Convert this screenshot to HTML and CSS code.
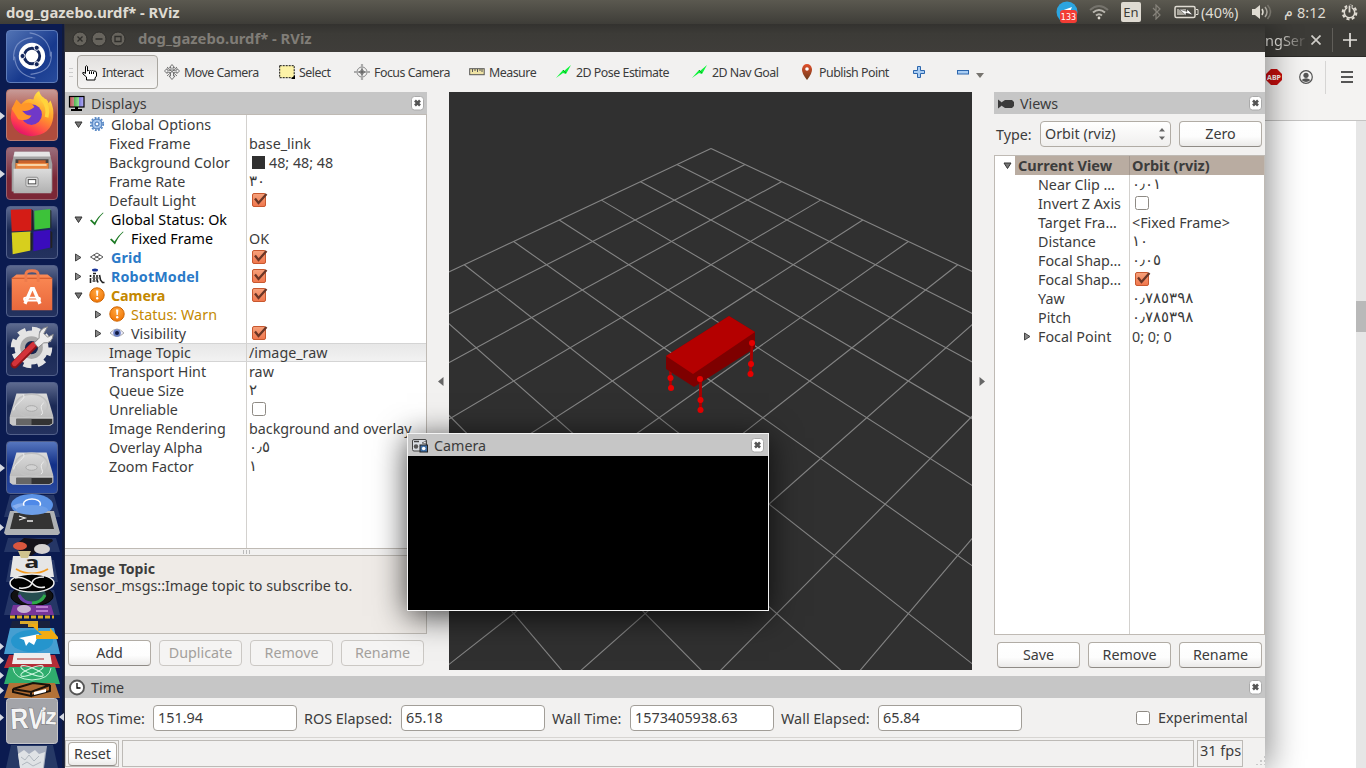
FILE: index.html
```html
<!DOCTYPE html>
<html lang="en">
<head>
<meta charset="utf-8">
<title>dog_gazebo.urdf* - RViz</title>
<link rel="stylesheet" href="styles.css">
</head>
<body>
<svg class="defs" width="0" height="0">
  <defs>
    <linearGradient id="orange" x1="0" y1="0" x2="0" y2="1"><stop offset="0" stop-color="#fb8a55"/><stop offset="1" stop-color="#e9683c"/></linearGradient>
    <linearGradient id="checkfill" x1="0" y1="0" x2="0" y2="1"><stop offset="0" stop-color="#f6a27c"/><stop offset="1" stop-color="#f0764c"/></linearGradient>
    <linearGradient id="disk" x1="0" y1="0" x2="0" y2="1"><stop offset="0" stop-color="#dcdcdc"/><stop offset="1" stop-color="#b0b0b0"/></linearGradient>
    <radialGradient id="warn" cx=".5" cy=".3" r=".8"><stop offset="0" stop-color="#ffa63e"/><stop offset="1" stop-color="#ee6f00"/></radialGradient>
    <linearGradient id="fox" x1=".8" y1="0" x2=".3" y2="1"><stop offset="0" stop-color="#fff04a"/><stop offset=".45" stop-color="#ff9a2b"/><stop offset=".8" stop-color="#ff3d4f"/><stop offset="1" stop-color="#e0106c"/></linearGradient>
    <linearGradient id="pin" x1="0" y1="0" x2="0" y2="1"><stop offset="0" stop-color="#e2502c"/><stop offset="1" stop-color="#6b3a1a"/></linearGradient>
    <symbol id="on" viewBox="0 0 17 16"><rect x="1.500" y="1.500" width="13" height="13" rx="1.500" fill="url(#checkfill)" stroke="#c8582f"/><path d="M4 6.500L7.500 11 15.500 2" fill="none" stroke="#6b3626" stroke-width="2.300"/></symbol>
    <symbol id="off" viewBox="0 0 17 16"><rect x="1.500" y="1.500" width="13" height="13" rx="2" fill="#fff" stroke="#8e8a84"/></symbol>
    <symbol id="down" viewBox="0 0 9 8"><path d="M1 1h7L4.500 6.500z" fill="#777" stroke="#333"/></symbol>
    <symbol id="right" viewBox="0 0 8 9"><path d="M1 1v7L6.500 4.500z" fill="#888" stroke="#444"/></symbol>
    <symbol id="tick" viewBox="0 0 15 15"><path d="M.5 8.500L2 7.500 5 10.500Q8 5 13.500.5L14 1Q8.500 6 5.500 13.500z" fill="#1d7a24"/></symbol>
    <symbol id="alert" viewBox="0 0 16 16"><circle cx="8" cy="8" r="7.200" fill="url(#warn)" stroke="#cf6500"/><path d="M7 3.500h2.400L8.800 9H7.600z" fill="#fff"/><circle cx="8.200" cy="11.300" r="1.200" fill="#fff"/></symbol>
    <symbol id="close" viewBox="0 0 13 15"><rect x=".5" y=".5" width="12" height="13.500" rx="3" fill="#fff" stroke="#aaa"/><path d="M4 4.500l5 5M9 4.500l-5 5" stroke="#555" stroke-width="2.600"/></symbol>
    <symbol id="arrow" viewBox="0 0 16 14"><path d="M0 13L7 5l1 1L15 0 10 9 7 8z" fill="#0df43a"/><path d="M7 5l3 3" stroke="#169c25"/></symbol>
    <symbol id="hdd" viewBox="0 0 53 53"><path d="M10 11h32l7 24v8l-3 2H6l-3-2v-8z" fill="url(#disk)"/><path d="M3 36h46v7l-3 2H6l-3-2z" fill="#c8c8c8"/><path d="M10 38h38v5l-3 1.500H10z" fill="#333"/><path d="M10 38h16v6.500H10z" fill="#666"/><ellipse cx="26" cy="24" rx="17" ry="12" fill="none" stroke="#c2c2c2" stroke-width="1.500"/><ellipse cx="26" cy="27" rx="6" ry="3" fill="#d2d2d2" stroke="#a8a8a8"/><path d="M17 12c5 5-9 9-10 17M36 34c5-3-4-8 3-13" fill="none" stroke="#eee"/></symbol>
  </defs>
</svg>

<header class="panel">
  <b class="panel-title">dog_gazebo.urdf* - RViz</b>
  <div class="tray">
    <svg class="tray-tg" width="22" height="22"><circle cx="11" cy="11" r="10.500" fill="#2ca5e0"/><path d="M5 10l11-4-3 7z" fill="#fff"/><rect x="4" y="9" width="17" height="13" rx="3" fill="#f23c34"/><text x="12.500" y="19" text-anchor="middle" class="badge">133</text></svg>
    <svg class="tray-wifi" width="20" height="16" fill="none" stroke-width="2"><path d="M1 6Q10-2 19 6" stroke="#75736c"/><path d="M4 8.500Q10 3.500 16 8.500M7 11.500Q10 9 13 11.500" stroke="#b9b6ae"/><circle cx="10" cy="14" r="1.400" fill="#dfdbd2" stroke="none"/></svg>
    <span class="lang">En</span>
    <svg class="tray-bt" width="10" height="16" fill="none" stroke="#85827a" stroke-width="1.200"><path d="M1 4l7 7-4 4V1l4 4-7 7"/></svg>
    <svg class="tray-bat" width="25" height="14"><rect x="1" y="1.500" width="20" height="11" rx="1.500" fill="none" stroke="#dfdbd2" stroke-width="1.500"/><rect x="3" y="4" width="9" height="6" fill="#a8a59c"/><path d="M22 4.500h2v5h-2" fill="none" stroke="#dfdbd2"/><path d="M5 4l8 2.500V4l6 6-7-2v2.500z" fill="#fff" stroke="#333" stroke-width=".5"/></svg>
    <span class="pct">(40%)</span>
    <svg class="tray-vol" width="21" height="16" fill="none" stroke-width="1.500"><path d="M1 5h3l5-4v14l-5-4H1z" fill="#dfdbd2"/><path d="M11 5q2 3 0 6" stroke="#dfdbd2"/><path d="M14 3q4 5 0 10" stroke="#aaa79f"/><path d="M16.500 1q6 7 0 14" stroke="#77746c"/></svg>
    <span class="meridiem">م</span><span class="clock">8:12</span>
    <svg class="tray-gear" width="17" height="17" fill="none" stroke="#dfdbd2"><circle cx="8.500" cy="8.500" r="6.800" stroke-width="2.200" stroke-dasharray="3 2.340"/><circle cx="8.500" cy="8.500" r="5.200" stroke-width="1.500"/><path d="M8.500 1v8" stroke="#44423d" stroke-width="4"/><path d="M8.500 1.500v7" stroke-width="1.800"/></svg>
  </div>
</header>

<section class="browser">
  <div class="tabs"><span class="tab-name">ngSer</span><svg width="10" height="10" stroke="#cfcdc8" stroke-width="1.700"><path d="M.5.5l9 9M9.500.5l-9 9"/></svg><i class="tab-sep"></i><svg width="14" height="14" stroke="#e4e2dd" stroke-width="1.700"><path d="M7 0v14M0 7h14"/></svg></div>
  <div class="navbar">
    <svg class="abp" width="16" height="16"><path d="M5 0h6l5 5v6l-5 5H5l-5-5V5z" fill="#c70d0d"/><text x="8" y="11" text-anchor="middle" class="abp-text">ABP</text></svg>
    <svg width="14" height="14"><circle cx="7" cy="7" r="6.300" fill="none" stroke="#555" stroke-width="1.200"/><circle cx="7" cy="5.300" r="2.600" fill="#555"/><path d="M2.500 10Q7 6.500 11.500 10 7 14 2.500 10" fill="#555"/></svg>
    <i class="nav-sep"></i>
    <svg width="12" height="12" stroke="#555" stroke-width="2"><path d="M0 1h12M0 6h12M0 11h12"/></svg>
  </div>
  <div class="page"><div class="scroll"><i class="thumb"></i></div></div>
</section>

<aside class="launcher">
  <div class="tile t-dash"><svg viewBox="0 0 53 53"><g fill="none" stroke="#8ea3d3" stroke-width="1.200" opacity=".7"><path d="M7 31C6 14 16 8 27 7M24 2c14 2 22 11 22 25M47 22c1 15-5 22-22 24M30 50C16 48 9 41 8 27"/></g><circle cx="26.500" cy="26.500" r="14" fill="#fff"/><circle cx="26.500" cy="26.500" r="8.200" fill="none" stroke="#14275b" stroke-width="3"/><g fill="#14275b" stroke="#fff"><circle cx="16.500" cy="26.500" r="2.700"/><circle cx="31.500" cy="17.800" r="2.700"/><circle cx="31.500" cy="35.200" r="2.700"/></g></svg></div>
  <div class="tile t-fox run"><svg viewBox="0 0 53 53"><path d="M5 20L10 10l5 5q6-7 13-5 1-6 6-9 2 7 8 9 2 2 2 4l2-3q4 8 3 18Q47 48 26 49 5 47 4 28z" fill="url(#fox)"/><circle cx="26" cy="26" r="11" fill="#7038c8"/><path d="M5 20l5-9 5 6q5-5 11-3l3 4q-6 5-13 4 5 6 10 5Q22 34 12 31z" fill="#ff9628"/><path d="M37 9q8 9 5 20" stroke="#ffd43c" stroke-width="4" fill="none"/></svg></div>
  <div class="tile t-files run"><svg viewBox="0 0 53 53"><path d="M8 4h37l3 13v29H5V17z" fill="#a2a2a2"/><path d="M8 4h37l1 5H7z" fill="#e5e5e5"/><path d="M9 12h35v11H9z" fill="#4a4340"/><path d="M12 13h29v8H12z" fill="#c9622c"/><path d="M9 16h35v7H9z" fill="#e8853f"/><path d="M11 18h31" stroke="#fff3d0" stroke-width="1.500"/><path d="M7 22h40v26H7z" fill="url(#disk)"/><rect x="20" y="31" width="13" height="10" rx="2" fill="#ddd" stroke="#888"/><rect x="22.500" y="33.500" width="8" height="4.500" fill="#fff" stroke="#444"/></svg></div>
  <div class="tile"><svg viewBox="0 0 53 53"><path d="M4 3l22-1v23l-21 1z" fill="#d41c16"/><path d="M29 4l17-2v20l-17 2z" fill="#3dc23a"/><path d="M5 27l20-1v20L6 50z" fill="#d7cf1d"/><path d="M28 26l18-2v19l-18 4z" fill="#3a0cbc"/><path d="M26 2l2 2v20l-2 1M46 3l1 1v19l-1-1M25 27l2 1v17l-2 2M46 25l2 2v16l-2 1" fill="#222"/></svg></div>
  <div class="tile"><svg viewBox="0 0 53 53"><path d="M5 13l5-4h33l5 4v34H5z" fill="url(#orange)"/><path d="M5 13h43" stroke="#c94f22"/><path d="M20 17V9q0-4 6.500-4T33 9v8" fill="none" stroke="#ee7b4c" stroke-width="3"/><g fill="none" stroke="#fff" stroke-width="3.500"><path d="M19 40l7-16h2l7 16"/><rect x="18" y="33.500" width="17" height="3" rx="1.500" stroke-width="2"/></g></svg></div>
  <div class="tile"><svg viewBox="0 0 53 53"><circle cx="26" cy="25" r="18" fill="#e4e4e4"/><circle cx="26" cy="25" r="19.500" fill="none" stroke="#e4e4e4" stroke-width="5" stroke-dasharray="8.500 6.800"/><circle cx="26" cy="25" r="12" fill="#aaa"/><circle cx="26" cy="25" r="7" fill="#18264f"/><path d="M8 43L28 23" stroke="#8b1418" stroke-width="8" stroke-linecap="round"/><path d="M8 42L28 22" stroke="#d3333a" stroke-width="5.500" stroke-linecap="round"/><path d="M29 20l5-5q-1-10 9-12l-4 7 4 4 6-3q-1 10-10 9l-6 5z" fill="#ececec" stroke="#888"/></svg></div>
  <div class="tile"><svg viewBox="0 0 53 53"><use href="#hdd"/></svg></div>
  <div class="tile t-blue run"><svg viewBox="0 0 53 53"><use href="#hdd"/></svg></div>
  <svg class="stack" width="65" height="274" viewBox="0 494 65 274">
    <path d="M10 495h44l6 22H4zM8 538h48l4 14H4zM10 560h44l4 22H6zM10 590h44l6 25H4z" fill="#344571" opacity=".65"/>
    <ellipse cx="32" cy="505" rx="21" ry="11" fill="#5b92e5"/><path d="M12 506q9-5 20-2l6 12H25z" fill="#8ab0ef"/><ellipse cx="32" cy="504" rx="8.500" ry="5" fill="#4f89e8" stroke="#fff" stroke-width="1.500"/>
    <path d="M10 511h44l6 22-2 2H6l-2-2z" fill="#aeb1b4"/><path d="M14 513h36l4 16H10z" fill="#343434"/><path d="M19 516l6 2-6 2M27 521h6" fill="none" stroke="#eee" stroke-width="1.300"/><ellipse cx="32" cy="510" rx="16" ry="5" fill="#6d9fe9"/>
    <path d="M15 545l9-7 14 1 14 0 1 2-9 6-13 9-11-4z" fill="#15121a"/><ellipse cx="20" cy="546" rx="7" ry="4" fill="#d9563e"/><ellipse cx="42" cy="549" rx="8" ry="5" fill="#d5d1d1"/>
    <path d="M13 556h38l3 21H10z" fill="#e6e6e6"/><path d="M18 551h13l-3 7h-7z" fill="#cfc38d"/><text transform="translate(32 568) scale(1.300 .8)" text-anchor="middle" class="amz">a</text><path d="M16 569q16 9 32 0" stroke="#f39a1e" stroke-width="2" fill="none"/>
    <ellipse cx="32" cy="596" rx="21" ry="10" fill="#111" stroke="#000"/><ellipse cx="32" cy="595" rx="14" ry="8" fill="#264d50"/><path d="M19 595q4 8 13 8" stroke="#6b3fb0" stroke-width="3" fill="none"/><path d="M32 603q9 0 13-8" stroke="#2eaa4b" stroke-width="3" fill="none"/>
    <ellipse cx="32" cy="583" rx="22" ry="9" fill="#000" stroke="#eee" stroke-width="1.500"/><path d="M15 578q8-2 17 5 1-6 12-6M32 583q-2 6-13 5M32 583q5 6 13 4" stroke="#eee" stroke-width="1.500" fill="none"/>
    <path d="M13 605h38l3 10H10z" fill="#77359a"/><ellipse cx="24" cy="609" rx="7" ry="4" fill="#c9b5d3"/><path d="M36 607h12M36 611h12" stroke="#b77acf" stroke-width="2"/>
    <path d="M10 617h44" stroke="#d9a92a" stroke-width="3" stroke-dasharray="5 2"/><path d="M12 621h38v8H10z" fill="#19213d"/><path d="M20 621h18v6H28v-3h-8z" fill="#d9a92a"/>
    <path d="M10 628h44l6 26H4z" fill="#459ed1"/><ellipse cx="32" cy="641" rx="21" ry="11" fill="#2595cd"/><path d="M19 638l20-4-5 11-5-3-3 4-2-6z" fill="#fff"/><path d="M30 624h8v7h12v-3l8 9v2H36v-4h6z" fill="#f2ac12"/>
    <path d="M9 655h46l5 13H4z" fill="#b42d37"/><path d="M14 653h36l2 11H12z" fill="#eee"/><path d="M17 659h27" stroke="#a22" stroke-width="1"/>
    <path d="M9 667h46l5 17H4z" fill="#2fad6d"/><g fill="none" stroke="#c9f5dd"><path d="M13 668q1 11 19 12 18-1 19-12"/><ellipse cx="32" cy="671" rx="12" ry="3" transform="rotate(22 32 671)"/><ellipse cx="32" cy="671" rx="12" ry="3" transform="rotate(-22 32 671)"/></g>
    <path d="M9 683h46l5 15H4z" fill="#b37238"/><path d="M13 689l20-6 17 2-19 7zM13 689v3l18 4v-4M31 696l19-5v-6" fill="#ad6930" stroke="#1b120b" stroke-width="2"/><path d="M34 692l12-3v3l-12 3z" fill="#fff"/>
    <rect x="6.500" y="698.500" width="51" height="45" rx="3" fill="#a3a4a9" stroke="#c4c4c8"/><g class="rv"><text transform="translate(11 729) rotate(-3) scale(.85 1)">R</text><text transform="translate(27 728) rotate(5) scale(.85 1)">V</text><text transform="translate(40 724) rotate(3) scale(.8)">i</text><text transform="translate(45 724) rotate(3) scale(.8)">z</text></g>
    <path d="M11 745h42l5 23H6z" fill="#263966"/><path d="M17 746h30l-3 22H20z" fill="#a5adbd"/><path d="M18 754l6-4 5 4 6-4 4 4 6-2-2 16H20z" fill="#dfe2e5"/><path d="M21 757l4 3 4-5 5 6 5-5M22 765l5-3 6 4 8-4" stroke="#b0b7bf" fill="none"/>
    <path d="M0 524l4 3.500-4 3.500zM0 643l4 3.500-4 3.500zM0 657l4 3.500-4 3.500zM0 672l4 3.500-4 3.500zM0 687l4 3.500-4 3.500zM0 714l4 3.500-4 3.500zM64 713l-5 4 5 4z" fill="#d5d9e2"/>
  </svg>
</aside>

<main class="window">
  <div class="titlebar">
    <svg width="54" height="16" fill="#67645d" stroke="#2f2e2b"><circle cx="8" cy="8" r="7"/><circle cx="27" cy="8" r="7"/><circle cx="46" cy="8" r="7"/><path d="M5.500 5.500l5 5M10.500 5.500l-5 5M23.500 8h7M43 5.500h6v5h-6z" stroke-width="1.300"/></svg>
    <b>dog_gazebo.urdf* - RViz</b>
  </div>
  <div class="toolbar">
    <i class="grip"></i>
    <span class="tool interact"><svg width="16" height="16" viewBox="0 0 16 16" fill="#fff" stroke="#000"><path d="M4.500 15V12L1 9q-1-2 1-1.500l1.500 1V1.500q1-1.500 2 0V6q1-1 2 0 1-1 2 0 1-1 2 0 3-.5 3 2V11l-1.500 2v2z"/><path d="M7.500 6.500V9M9.500 6.500V9M11.500 7v2" fill="none"/></svg>Interact</span>
    <span class="tool" style="width:115px"><svg width="16" height="16" fill="#eee" stroke="#666" stroke-width=".9"><path d="M8 .5l2.500 3H9v3l4-.5V4.500L15.500 7 13 9.500V8L9.500 8.500V12H11l-3 3.500L5 12h1.500V8.500L3 8v1.500L.5 7 3 4.500V6l4 .5v-3H5.500z"/><path d="M3 3l10 9M13 3L3 12"/></svg>Move Camera</span>
    <span class="tool" style="width:75px"><svg width="16" height="14"><rect x=".7" y=".7" width="14.500" height="12" fill="#fdf3a8" stroke="#111" stroke-dasharray="2 1"/><path d="M16 10v4h-4z"/></svg>Select</span>
    <span class="tool" style="width:115px"><svg width="16" height="16" fill="none" stroke="#888"><circle cx="8" cy="8" r="5"/><circle cx="8" cy="8" r="2"/><path d="M8 0v16M0 8h16" stroke-width="2.200" stroke="#aaa"/><path d="M8 5v6M5 8h6" stroke="#555"/></svg>Focus Camera</span>
    <span class="tool" style="width:87px"><svg width="16" height="8"><rect x=".7" y=".7" width="14.500" height="6" fill="#efe3a5" stroke="#555"/><path d="M3.500 1v3M6 1v2M8.500 1v3M11 1v2M13 1v3" stroke="#555"/></svg>Measure</span>
    <span class="tool" style="width:136px"><svg width="16" height="14"><use href="#arrow"/></svg>2D Pose Estimate</span>
    <span class="tool" style="width:107px"><svg width="16" height="14"><use href="#arrow"/></svg>2D Nav Goal</span>
    <span class="tool" style="width:114px"><svg width="16" height="16"><path d="M8 16Q2.500 9 3 5q1-5 5-5t5 5q.5 4-5 11z" fill="url(#pin)"/><circle cx="8" cy="5" r="1.800" fill="#fff"/></svg>Publish Point</span>
    <span class="tool" style="width:44px"><svg width="12" height="12"><path d="M4.500.5h3v4h4v3h-4v4h-3v-4h-4v-3h4z" fill="#a9cdf3" stroke="#2c66ad"/></svg></span>
    <span class="tool last"><svg width="12" height="5"><rect x=".5" y=".5" width="11" height="3.500" fill="#a9cdf3" stroke="#2c66ad"/></svg><svg class="caret" width="8" height="5"><path d="M0 0h8L4 5z" fill="#77746f"/></svg></span>
  </div>

  <div class="work">
    <section class="dock left">
      <h2 class="head"><svg width="17" height="17"><defs><linearGradient id="tv"><stop offset="0" stop-color="#c05050"/><stop offset=".33" stop-color="#c89090"/><stop offset=".34" stop-color="#58b458"/><stop offset=".66" stop-color="#98e098"/><stop offset=".67" stop-color="#7878d8"/><stop offset="1" stop-color="#b8b0f8"/></linearGradient></defs><rect x="1.500" y="1.500" width="14.500" height="10.500" fill="url(#tv)" stroke="#000" stroke-width="1.200"/><path d="M7 12h3v2h4v2H3v-2h4z"/></svg><span>Displays</span><svg class="x" width="13" height="15"><use href="#close"/></svg></h2>
      <div class="tree">
        <div class="row"><span class="k l1"><svg class="ar" width="9" height="8"><use href="#down"/></svg><svg class="ic" width="16" height="15"><circle cx="8" cy="7" r="5" fill="#a5c5ec" stroke="#3b6fb4"/><circle cx="8" cy="7" r="6.200" fill="none" stroke="#5587c5" stroke-width="1.800" stroke-dasharray="1.900 1.350"/><circle cx="8" cy="7" r="2" fill="#fff" stroke="#3b6fb4"/></svg>Global Options</span><span class="v"></span></div>
        <div class="row"><span class="k leaf">Fixed Frame</span><span class="v">base_link</span></div>
        <div class="row"><span class="k leaf">Background Color</span><span class="v"><i class="swatch"></i>48; 48; 48</span></div>
        <div class="row"><span class="k leaf">Frame Rate</span><span class="v ar-num">٣٠</span></div>
        <div class="row"><span class="k leaf">Default Light</span><span class="v"><svg class="ck" width="17" height="16"><use href="#on"/></svg></span></div>
        <div class="row black"><span class="k l1"><svg class="ar" width="9" height="8"><use href="#down"/></svg><svg class="ic" width="16" height="15"><use href="#tick"/></svg>Global Status: Ok</span><span class="v"></span></div>
        <div class="row"><span class="k l2 black"><i class="ar"></i><svg class="ic" width="16" height="15"><use href="#tick"/></svg>Fixed Frame</span><span class="v">OK</span></div>
        <div class="row"><span class="k l1 blue"><svg class="ar" width="8" height="9"><use href="#right"/></svg><svg class="ic" width="16" height="13" fill="none" stroke="#555"><path d="M1.500 6L8 2l6 4-6 4zM4.500 4l6.500 4M11 4L4.500 8"/></svg>Grid</span><span class="v"><svg class="ck" width="17" height="16"><use href="#on"/></svg></span></div>
        <div class="row"><span class="k l1 blue"><svg class="ar" width="8" height="9"><use href="#right"/></svg><svg class="ic" width="16" height="16"><ellipse cx="6" cy="2" rx="3" ry="1.500" fill="#173398"/><path d="M1.500 7v2M1.500 10v5M4 5.500h3M5 7v7M8 7v5l1 2.500M10.500 7l1 5 2 2.500h2" stroke="#222" stroke-width="1.600" fill="none"/><path d="M3 10h8M3 13h5" stroke="#777"/></svg>RobotModel</span><span class="v"><svg class="ck" width="17" height="16"><use href="#on"/></svg></span></div>
        <div class="row"><span class="k l1 gold bold"><svg class="ar" width="9" height="8"><use href="#down"/></svg><svg class="ic" width="16" height="16"><use href="#alert"/></svg>Camera</span><span class="v"><svg class="ck" width="17" height="16"><use href="#on"/></svg></span></div>
        <div class="row"><span class="k l2 gold"><svg class="ar" width="8" height="9"><use href="#right"/></svg><svg class="ic" width="16" height="16"><use href="#alert"/></svg>Status: Warn</span><span class="v"></span></div>
        <div class="row"><span class="k l2"><svg class="ar" width="8" height="9"><use href="#right"/></svg><svg class="ic" width="16" height="12"><path d="M1 6Q8-2 15 6 8 13 1 6z" fill="#eef" stroke="#aaa"/><circle cx="8" cy="6" r="3.800" fill="#6b80c4"/><circle cx="8" cy="6" r="2" fill="#111942"/></svg>Visibility</span><span class="v"><svg class="ck" width="17" height="16"><use href="#on"/></svg></span></div>
        <div class="row sel"><span class="k leaf">Image Topic</span><span class="v">/image_raw</span></div>
        <div class="row"><span class="k leaf">Transport Hint</span><span class="v">raw</span></div>
        <div class="row"><span class="k leaf">Queue Size</span><span class="v ar-num">٢</span></div>
        <div class="row"><span class="k leaf">Unreliable</span><span class="v"><svg class="ck" width="17" height="16"><use href="#off"/></svg></span></div>
        <div class="row"><span class="k leaf">Image Rendering</span><span class="v">background and overlay</span></div>
        <div class="row"><span class="k leaf">Overlay Alpha</span><span class="v ar-num">٠٫٥</span></div>
        <div class="row"><span class="k leaf">Zoom Factor</span><span class="v ar-num">١</span></div>
        <div class="row fill"><span class="k"></span><span class="v"></span></div>
      </div>
      <div class="split"><i></i><i></i><i></i></div>
      <div class="help"><b>Image Topic</b><span>sensor_msgs::Image topic to subscribe to.</span></div>
      <div class="buttons"><button>Add</button><button disabled>Duplicate</button><button disabled>Remove</button><button disabled>Rename</button></div>
    </section>
    <div class="gutter"><svg width="6" height="9"><path d="M5.500 0v9L0 4.500z" fill="#666"/></svg></div>
    <svg class="view" width="523" height="578" viewBox="0 0 523 578">
      <g id="grid" stroke="#848484" stroke-width="1.100"></g>
      <g class="robot">
        <path d="M221.500 277v18M251.500 290v26M303 252l-1.500 30" stroke="#b00000" stroke-width="2.500"/>
        <path d="M217 264l63-40 26 16v16l-61 39-28-18z" fill="#7e0000"/>
        <path d="M217 264l63-40 26 16-62 42z" fill="#b40000"/>
        <path d="M251.500 288v28M303 252l-1.500 30" stroke="#a80000" stroke-width="2.500"/>
        <g fill="#e60000"><circle cx="221.500" cy="286" r="3"/><circle cx="222" cy="296" r="3"/><circle cx="251" cy="287" r="3"/><circle cx="251.500" cy="308" r="3"/><circle cx="251.500" cy="318" r="3"/><circle cx="303" cy="251" r="3"/><circle cx="302" cy="272" r="3"/><circle cx="301.500" cy="282" r="3"/></g>
      </g>
    </svg>
    <div class="gutter r"><svg width="6" height="9"><path d="M.5 0v9L6 4.500z" fill="#666"/></svg></div>
    <section class="dock right">
      <h2 class="head"><svg width="17" height="17" fill="#3a3a3a"><path d="M1 4.500l4 3v3l-4 3z"/><path d="M8 5h7l2 2v4l-2 2H8l-3-2V7z"/></svg><span>Views</span><svg class="x" width="13" height="15"><use href="#close"/></svg></h2>
      <div class="type"><label>Type:</label><div class="combo">Orbit (rviz)<svg width="8" height="12" fill="#666"><path d="M1 3.500h6L4 0zM1 8.500h6L4 12z"/></svg></div><button>Zero</button></div>
      <div class="tree views">
        <div class="row cur"><span class="k"><svg class="ar" width="9" height="8"><use href="#down"/></svg>Current View</span><span class="v">Orbit (rviz)</span></div>
        <div class="row"><span class="k leaf">Near Clip …</span><span class="v ar-num">٠٫٠١</span></div>
        <div class="row"><span class="k leaf">Invert Z Axis</span><span class="v"><svg class="ck" width="17" height="16"><use href="#off"/></svg></span></div>
        <div class="row"><span class="k leaf">Target Fra…</span><span class="v">&lt;Fixed Frame&gt;</span></div>
        <div class="row"><span class="k leaf">Distance</span><span class="v ar-num">١٠</span></div>
        <div class="row"><span class="k leaf">Focal Shap…</span><span class="v ar-num">٠٫٠٥</span></div>
        <div class="row"><span class="k leaf">Focal Shap…</span><span class="v"><svg class="ck" width="17" height="16"><use href="#on"/></svg></span></div>
        <div class="row"><span class="k leaf">Yaw</span><span class="v ar-num">٠٫٧٨٥٣٩٨</span></div>
        <div class="row"><span class="k leaf">Pitch</span><span class="v ar-num">٠٫٧٨٥٣٩٨</span></div>
        <div class="row"><span class="k fp"><svg class="ar" width="8" height="9"><use href="#right"/></svg>Focal Point</span><span class="v">0; 0; 0</span></div>
        <div class="row fill"><span class="k"></span><span class="v"></span></div>
      </div>
      <div class="buttons"><button>Save</button><button>Remove</button><button>Rename</button></div>
    </section>
  </div>

  <h2 class="head time-head"><svg width="17" height="17"><circle cx="9" cy="8.500" r="7" fill="#fff" stroke="#555" stroke-width="1.800"/><path d="M9 4v5h3.500" fill="none" stroke="#000" stroke-width="1.300"/></svg><span>Time</span><svg class="x" width="13" height="15"><use href="#close"/></svg></h2>
  <div class="times">
    <label style="width:77px">ROS Time:</label><div class="field">151.94</div>
    <label style="width:97px">ROS Elapsed:</label><div class="field">65.18</div>
    <label style="width:78px">Wall Time:</label><div class="field">1573405938.63</div>
    <label style="width:97px">Wall Elapsed:</label><div class="field">65.84</div>
    <span class="exp"><svg width="17" height="16"><use href="#off"/></svg>Experimental</span>
  </div>
  <footer class="status"><div class="cell reset"><button>Reset</button></div><div class="cell msg"></div><div class="cell fps">31 fps</div><i class="sizer"></i></footer>
</main>

<section class="camera">
  <h2 class="head"><svg width="17" height="17"><rect x="1.500" y="2.500" width="14" height="11.500" rx="1.500" fill="#d9dde2" stroke="#444"/><path d="M3 4.500h5" stroke="#444" stroke-width="1.500"/><circle cx="5" cy="9.500" r="2.200" fill="#555"/><path d="M11 6l4-2v3z" fill="#fff" stroke="#444" stroke-width=".7"/><rect x="9" y="8" width="7.500" height="7" fill="#3f70a8" stroke="#222"/><circle cx="12.700" cy="11.500" r="1.800" fill="#fff"/></svg><span>Camera</span><svg class="x" width="13" height="15"><use href="#close"/></svg></h2>
  <div class="feed"></div>
</section>
<script src="grid.js"></script>
</body>
</html>
```
FILE: styles.css
```css
* { box-sizing: border-box; }
body { margin: 0; width: 1366px; height: 768px; overflow: hidden; position: relative; background: #fff; color: #3c3c3c; font: 14.3px/19px "Noto Sans", "DejaVu Sans", sans-serif; white-space: nowrap; }
svg { display: block; flex: none; }
.defs { position: absolute; }
h2 { margin: 0; font-size: inherit; font-weight: normal; }
i { font-style: normal; }

/* top panel */
.panel { position: absolute; z-index: 5; left: 0; top: 0; width: 1366px; height: 24px; background: linear-gradient(#5b5950, #3e3d38); color: #dfdbd2; display: flex; justify-content: space-between; align-items: center; padding: 0 8px 0 6px; }
.panel-title { font-size: 14.8px; }
.tray { display: flex; align-items: center; height: 24px; }
.tray-tg { margin-right: 11px; }
.badge { font: 8px "DejaVu Sans", sans-serif; fill: #fff; }
.tray-wifi { margin-right: 12px; }
.lang { width: 20px; height: 20px; line-height: 20px; border-radius: 2px; background: #dfdbd2; color: #3c3b37; text-align: center; font-size: 13px; margin-right: 11px; }
.tray-bt { margin-right: 12px; }
.pct { width: 52px; padding-left: 2px; font-size: 14.5px; }
.tray-vol { margin-right: 12px; }
.meridiem { font-family: "DejaVu Sans", sans-serif; width: 13px; }
.clock { width: 44px; font-size: 14.5px; }

/* browser behind */
.browser { position: absolute; left: 1265px; top: 24px; width: 101px; height: 744px; }
.tabs { height: 33px; background: #3c3b37; display: flex; align-items: center; color: #e8e6e1; border-bottom: 1px solid #2c2b28; }
.tab-name { width: 46px; font-size: 14.5px; background: linear-gradient(90deg, #e8e6e1 30%, #55534e 85%); -webkit-background-clip: text; background-clip: text; color: transparent; }
.tabs > i { width: 1px; height: 24px; background: #605e59; margin: 0 10px 0 11px; }
.navbar { height: 64px; background: #f4f3f2; border-bottom: 1px solid #c5c4c3; display: flex; align-items: center; padding: 0 0 23px 0; }
.navbar .abp { margin-right: 17px; margin-left: 1px; }
.abp-text { font: bold 7px "Noto Sans", sans-serif; fill: #fff; }
.nav-sep { width: 1px; height: 33px; background: #d6d5d4; margin: 0 15px 0 12px; }
.page { height: 647px; background: #fff; display: flex; justify-content: flex-end; }
.scroll { width: 10px; background: #e6e6e6; padding-top: 180px; }
.thumb { display: block; height: 31px; background: #b9b9b9; }

/* launcher */
.launcher { position: absolute; left: 0; top: 24px; width: 65px; height: 744px; padding: 6px 0 0 6px; background: linear-gradient(90deg, #0b1b50 0 62px, #101a3c 62px 64px, #2a2d3d 64px); display: flex; flex-direction: column; gap: 6px; }
.tile { position: relative; flex: none; width: 52px; height: 52.7px; border-radius: 4px; border: 1px solid #52608a; background: linear-gradient(#5d6a8f, #1a2955 45%, #24325f); }
.tile svg { width: 50px; height: 50px; }
.t-dash { background: linear-gradient(135deg, #5273b4, #17398d 60%, #274b9c); border-color: #5e7cba; }
.t-fox { background: linear-gradient(#c79a97, #ae4c3d 50%); border-color: #b97a70; }
.t-files { background: linear-gradient(#9a6d7b, #7b2736 60%); border-color: #97616d; }
.t-blue { background: linear-gradient(#5676be, #123088 45%, #2849a0); }
.run::before { content: ""; position: absolute; left: -7px; top: 22px; border: 4px solid transparent; border-left: 5px solid #d5d9e2; border-right: 0; }
.stack { margin: -6px 0 0 -6px; }
.amz { font: bold 19px "Noto Sans", sans-serif; fill: #222; }
.rv { font: bold 29px "Liberation Sans", sans-serif; fill: #f4f4f4; stroke: #6f6f73; stroke-width: 1px; paint-order: stroke; }

/* main window */
.window { position: absolute; left: 65px; top: 24px; width: 1200px; height: 744px; background: #f2f1f0; display: flex; flex-direction: column; box-shadow: 4px 2px 32px rgba(0,0,0,.45); clip-path: inset(0 -60px 0 0); }
.titlebar { height: 28px; flex: none; background: linear-gradient(#33322f, #3c3b37 35%, #3f3d3a); display: flex; align-items: center; gap: 11px; padding: 1px 0 0 7px; color: #807d77; font-size: 14.8px; }
.titlebar b { margin-left: 1px; }
.toolbar { height: 40px; flex: none; display: flex; align-items: center; font-size: 12.4px; letter-spacing: -.5px; }
.grip { width: 4px; height: 9px; margin: 0 4px; background: repeating-linear-gradient(#ccc 0 1px, transparent 1px 4px); }
.tool { display: flex; align-items: center; gap: 4px; height: 34px; flex: none; }
.interact { width: 81px; padding: 1px 0 0 4px; margin-right: 6px; border: 1px solid #a9a6a0; border-radius: 4px; background: linear-gradient(#e3e1df, #f5f4f3); }
.last { gap: 7px; }
.caret { margin-top: 6px; }
.work { height: 578px; display: flex; flex: none; }
.dock { display: flex; flex-direction: column; flex: none; }
.left { width: 362px; }
.right { width: 271px; }
.head { height: 22px; flex: none; display: flex; align-items: center; gap: 6px; background: #c6c6c6; padding: 0 3px 0 3px; }
.head span { flex: 1; padding-top: 1px; }
.gutter { width: 22px; display: flex; align-items: center; justify-content: flex-end; padding: 0 5px; }
.gutter.r { justify-content: flex-start; padding: 0 7px; }
.tree { height: 435px; flex: none; background: #fff; border: 1px solid #bfbab4; border-width: 1px 1px 1px 0; display: flex; flex-direction: column; }
.row { height: 19px; flex: none; display: flex; }
.row.fill { flex: 1; height: auto; }
.k { width: 182px; border-right: 1px solid #d3d1ce; display: flex; align-items: center; flex: none; }
.v { flex: 1; padding-left: 2px; display: flex; align-items: center; }
.leaf { padding-left: 44px; }
.l1 { padding-left: 9px; }
.l2 { padding-left: 29px; }
.ar { width: 9px; margin-right: 6px; flex: none; }
.ic { margin-right: 6px; margin-bottom: 1px; }
.ck { margin: 0 0 2px 2px; }
.swatch { width: 13px; height: 13px; background: #303030; margin: 0 4px 0 3px; }
.black { color: #000; }
.black .k, .k.black { letter-spacing: .05px; }
.blue { color: #2a7ac8; font-weight: bold; letter-spacing: .15px; }
.gold { color: #c48800; letter-spacing: .07px; }
.bold { font-weight: bold; letter-spacing: -.1px; }
.sel { background: linear-gradient(#e7e7e7, #f2f2f2); border: 1px solid #d4d4d4; border-width: 1px 0; }
.ar-num { font-family: "DejaVu Sans", sans-serif; font-size: 15px; }
.split { height: 6px; flex: none; display: flex; gap: 2px; align-items: center; justify-content: center; }
.split i { width: 1px; height: 4px; background: #bbb; }
.help { height: 79px; flex: none; border: 1px solid #c0bcb6; border-left: 0; background: #efebe7; padding: 4px 5px; display: flex; flex-direction: column; line-height: 17px; font-size: 14.3px; }
.help b { font-size: 14.1px; }
.buttons { display: flex; gap: 8px; padding: 6px 3px 0; }
button { width: 83px; height: 26px; flex: none; padding: 0 0 2px; border: 1px solid #b1aca5; border-bottom-color: #8f8b86; border-radius: 4px; background: linear-gradient(#fff, #fdfdfd 60%, #ebeae9); color: #3c3c3c; font: 14.3px/19px "Noto Sans", sans-serif; }
button:disabled { color: #a3a09c; border-color: #cbc8c4; background: #f5f4f3; }
.view { background: #303030; }
.type { height: 41px; flex: none; display: flex; align-items: center; padding: 0 3px 1px 2px; }
.type label { width: 44px; }
.combo { width: 131px; height: 26px; margin-right: 8px; border: 1px solid #b1aca5; border-radius: 4px; background: linear-gradient(#fff, #f0efee); display: flex; align-items: center; justify-content: space-between; padding: 0 4px 1px; }
.views { height: 480px; border-left-width: 1px; }
.views .k { width: 135px; }
.views .leaf { padding-left: 43px; }
.views .cur { font-weight: bold; font-size: 14.5px; background: linear-gradient(90deg, #fff 20px, #b9aca1 20px); }
.cur .k { padding-left: 8px; border-color: #a3978e; }
.views .fp { padding-left: 28px; }
.right .buttons { padding-top: 7px; }

/* time dock and status bar */
.time-head { margin-top: 6px; }
.times { height: 40px; flex: none; display: flex; align-items: center; padding-left: 11px; border-bottom: 1px solid #d7d5d2; font-size: 14.4px; }
.times label { padding-top: 1px; }
.field { width: 144px; height: 26px; margin-right: 7px; border: 1px solid #a29e98; border-radius: 4px; background: #fff; padding: 2px 0 0 4px; }
.exp { display: flex; align-items: center; gap: 6px; margin-left: 106px; }
.status { height: 30px; display: flex; padding-top: 2px; gap: 3px; }
.cell { height: 27px; border: 1px solid #bdbab6; }
.reset { width: 54px; padding: 1px 2px; }
.reset button { width: 49px; height: 24px; }
.msg { width: 1072px; }
.fps { width: 46px; padding-left: 2px; font-size: 14.5px; line-height: 18px; }
.sizer { width: 10px; height: 10px; margin: 15px 0 0 9px; background: radial-gradient(#c9c9c9 1px, transparent 1.200px) 0 0/4px 4px; clip-path: polygon(100% 0, 100% 100%, 0 100%); }

/* floating camera panel */
.camera { position: absolute; left: 407px; top: 433px; width: 362px; height: 178px; border: 1px solid #f4f4f4; display: flex; flex-direction: column; box-shadow: 0 5px 30px rgba(0,0,0,.75); }
.camera .head { padding-right: 4px; }
.feed { flex: 1; background: #000; }
```
FILE: grid.js
```js
// 10 x 10 ground grid seen by the orbit camera: distance 10, yaw and pitch 45 degrees.
const FOCAL = 697.7;
const project = (i, j) => {
  const half = (i + j) / 2;
  const depth = 10 + half;
  return [262 + FOCAL * (i - j) / Math.SQRT2 / depth, 289 - FOCAL * half / depth];
};
const grid = document.getElementById("grid");
const addLine = (a, b) => {
  const line = document.createElementNS("http://www.w3.org/2000/svg", "line");
  line.setAttribute("x1", a[0]);
  line.setAttribute("y1", a[1]);
  line.setAttribute("x2", b[0]);
  line.setAttribute("y2", b[1]);
  grid.appendChild(line);
};
for (let n = -5; n <= 5; n++) {
  addLine(project(n, -5), project(n, 5));
  addLine(project(-5, n), project(5, n));
}
```
